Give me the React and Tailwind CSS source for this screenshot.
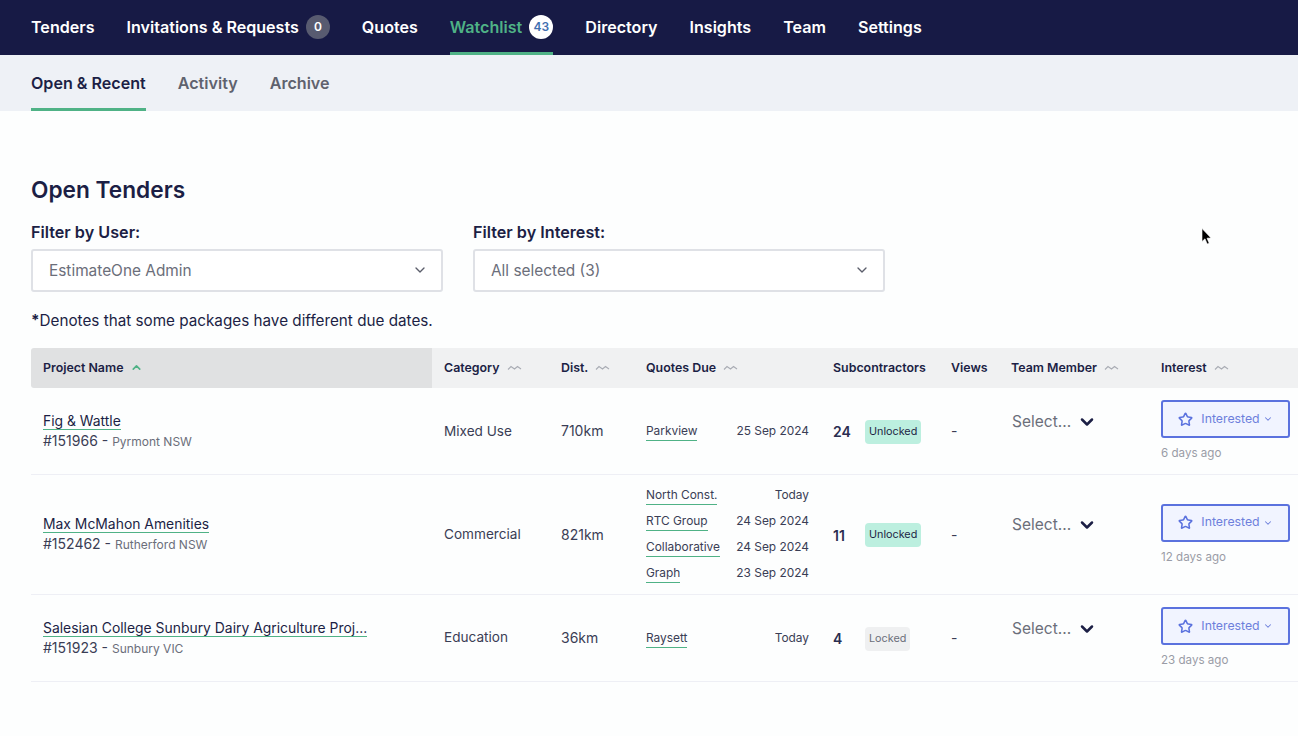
import { ChevronDown, ChevronUp, Star } from "lucide-react";

const rows = [
  {
    name: "Fig & Wattle",
    id: "#151966",
    place: "Pyrmont NSW",
    category: "Mixed Use",
    dist: "710km",
    quotes: [["Parkview", "25 Sep 2024"]],
    subs: 24,
    unlocked: true,
    ago: "6 days ago",
    height: "h-[86px]",
  },
  {
    name: "Max McMahon Amenities",
    id: "#152462",
    place: "Rutherford NSW",
    category: "Commercial",
    dist: "821km",
    quotes: [
      ["North Const.", "Today"],
      ["RTC Group", "24 Sep 2024"],
      ["Collaborative", "24 Sep 2024"],
      ["Graph", "23 Sep 2024"],
    ],
    subs: 11,
    unlocked: true,
    ago: "12 days ago",
    height: "h-[120px]",
  },
  {
    name: "Salesian College Sunbury Dairy Agriculture Proj...",
    id: "#151923",
    place: "Sunbury VIC",
    category: "Education",
    dist: "36km",
    quotes: [["Raysett", "Today"]],
    subs: 4,
    unlocked: false,
    ago: "23 days ago",
    height: "h-[87px]",
  },
];

function SortIcon() {
  return (
    <svg width="15" height="6" viewBox="0 0 15 6" fill="none" stroke="#a9acb4" strokeWidth="1.1" className="ml-[7px] inline-block">
      <path d="M1 4.5 L4 1.5 L7.5 4 L10.5 1.5 L14 4" />
    </svg>
  );
}

function NavItem({ label, active, badge }) {
  return (
    <div className={`flex h-[55px] items-center border-b-[3px] pt-[2px] text-[16.1px] font-semibold ${active ? "border-[#4fb286] text-[#4fb286]" : "border-transparent text-white"}`}>
      {label}
      {badge && (
        <span className={`ml-[7px] flex h-6 w-6 items-center justify-center rounded-full text-[12px] font-semibold ${active ? "bg-white text-[#3f6fb0]" : "bg-[#585b70] text-white"}`}>
          {badge}
        </span>
      )}
    </div>
  );
}

function FilterSelect({ label, value }) {
  return (
    <div className="w-[412px]">
      <div className="text-[16.2px] font-semibold leading-[24px] text-[#1c1f45]">{label}</div>
      <div className="mt-[5px] flex h-[43px] items-center justify-between rounded-[3px] border-2 border-[#dfe1e6] bg-white pl-4 pr-[13px] text-[15.4px] text-[#6b6e7a]">
        {value}
        <ChevronDown size={16} strokeWidth={2} className="-mt-[2px] text-[#5b5e6b]" />
      </div>
    </div>
  );
}

function Th({ children, sort, className = "" }) {
  return (
    <th className={`bg-[#f0f1f2] pl-3 text-left text-[12.4px] font-semibold text-[#1c1f45] ${className}`}>
      <span className="flex items-center whitespace-nowrap">
        {children}
        {sort && <SortIcon />}
      </span>
    </th>
  );
}

export default function App() {
  return (
    <div className="relative min-h-[736px] overflow-hidden bg-[#fdfefe] font-['Inter',sans-serif] text-[#1c1f45]">
      {/* top nav */}
      <nav className="flex h-[55px] gap-8 bg-[#171a45] pl-[31px]">
        <NavItem label="Tenders" />
        <NavItem label="Invitations & Requests" badge="0" />
        <NavItem label="Quotes" />
        <NavItem label="Watchlist" badge="43" active />
        <NavItem label="Directory" />
        <NavItem label="Insights" />
        <NavItem label="Team" />
        <NavItem label="Settings" />
      </nav>

      {/* sub nav */}
      <div className="flex h-[56px] gap-8 bg-[#eef1f6] pl-[31px] text-[16.1px] font-semibold">
        <div className="flex items-center border-b-[3px] border-[#4fb286] pt-[3px] text-[#1c1f45]">Open &amp; Recent</div>
        <div className="flex items-center border-b-[3px] border-transparent pt-[3px] text-[#5f626e]">Activity</div>
        <div className="flex items-center border-b-[3px] border-transparent pt-[3px] text-[#5f626e]">Archive</div>
      </div>

      <main className="pl-[31px]">
        <h1 className="mt-[63px] text-[22.7px] font-semibold leading-[32px] text-[#1c1f45]">Open Tenders</h1>
        <div className="mt-[14px] flex gap-[30px]">
          <FilterSelect label="Filter by User:" value="EstimateOne Admin" />
          <FilterSelect label="Filter by Interest:" value="All selected (3)" />
        </div>
        <p className="mt-[17px] text-[15.25px] leading-[24px] text-[#1c1f45]">
          <b>*</b>Denotes that some packages have different due dates.
        </p>

        <table className="mt-[15px] w-[1267px] table-fixed border-collapse">
          <colgroup>
            <col className="w-[401px]" />
            <col className="w-[117px]" />
            <col className="w-[85px]" />
            <col className="w-[187px]" />
            <col className="w-[118px]" />
            <col className="w-[60px]" />
            <col className="w-[150px]" />
            <col className="w-[149px]" />
          </colgroup>
          <thead>
            <tr className="h-[40px]">
              <th className="rounded-l-[3px] bg-[#e0e1e2] pl-3 text-left text-[12.4px] font-semibold text-[#1c1f45]">
                <span className="flex items-center">
                  Project Name
                  <ChevronUp size={13} strokeWidth={3} className="ml-[7px] text-[#4fb286]" />
                </span>
              </th>
              <Th sort>Category</Th>
              <Th sort>Dist.</Th>
              <Th sort>Quotes Due</Th>
              <Th>Subcontractors</Th>
              <Th>Views</Th>
              <Th sort>Team Member</Th>
              <Th sort>Interest</Th>
            </tr>
          </thead>
          <tbody>
            {rows.map((row) => (
              <tr key={row.id} className={`${row.height} border-b border-[#eeeff5]`}>
                <td className="pb-[3px] pl-3 align-middle">
                  <a className="border-b border-[#4fb286] text-[13.9px] leading-[17px] text-[#1c1f45]">{row.name}</a>
                  <div className="text-[14px] leading-[18px] text-[#3a3d55]">
                    {row.id} - <span className="text-[12px] text-[#6b6e7a]">{row.place}</span>
                  </div>
                </td>
                <td className="pl-3 text-[13.6px] text-[#3a3d55]">{row.category}</td>
                <td className="pl-3 text-[14px] text-[#3a3d55]">{row.dist}</td>
                <td className="pl-3 pr-3 pt-[2px]">
                  <div className="flex flex-col gap-[7.7px]">
                    {row.quotes.map(([name, due]) => (
                      <div key={name} className="flex items-start justify-between text-[11.9px] leading-[16px] text-[#3a3d55]">
                        <a className="border-b border-[#4fb286] pb-[1px]">{name}</a>
                        <span>{due}</span>
                      </div>
                    ))}
                  </div>
                </td>
                <td className="pl-3 pt-[2px]">
                  <div className="flex items-center">
                    <span className="w-8 text-[14px] font-semibold text-[#2a2d50]">{row.subs}</span>
                    {row.unlocked ? (
                      <span className="rounded-[4px] bg-[#bcefdf] px-1 py-[5px] text-[10.8px] leading-[14px] text-[#1c1f45]">Unlocked</span>
                    ) : (
                      <span className="rounded-[4px] bg-[#eff0f1] px-1 py-[5px] text-[10.8px] leading-[14px] text-[#6b6e7a]">Locked</span>
                    )}
                  </div>
                </td>
                <td className="pl-3 text-[14px] text-[#3a3d55]">-</td>
                <td className="pl-[13px] align-middle">
                  <div className="-mt-[18px] flex items-center text-[15.5px] text-[#6b6e7a]">
                    Select...
                    <ChevronDown size={20} strokeWidth={3} className="ml-[6px] text-[#1c1f45]" />
                  </div>
                </td>
                <td className="pl-3 align-middle">
                  <div className="flex h-[38px] w-[129px] items-center justify-center rounded-[3px] border-2 border-[#5b72de] bg-[#f1f4ff] text-[12.3px] text-[#6d7fdc]">
                    <Star size={15} strokeWidth={2.5} className="mr-2 text-[#5b72de]" />
                    Interested
                    <ChevronDown size={10} strokeWidth={2.5} className="ml-[3px]" />
                  </div>
                  <div className="mt-[7px] text-[11.6px] leading-[16px] text-[#9a9ca6]">{row.ago}</div>
                </td>
              </tr>
            ))}
          </tbody>
        </table>
      </main>

      {/* mouse pointer */}
      <svg width="12" height="18" viewBox="0 0 12 18" className="absolute left-[1201px] top-[228px]">
        <path d="M1 0.5 L1 13.5 L4 10.8 L6.2 16 L8.2 15.2 L6 10.2 L10 10 Z" fill="#000" stroke="#fff" strokeWidth="0.6" />
      </svg>
    </div>
  );
}
